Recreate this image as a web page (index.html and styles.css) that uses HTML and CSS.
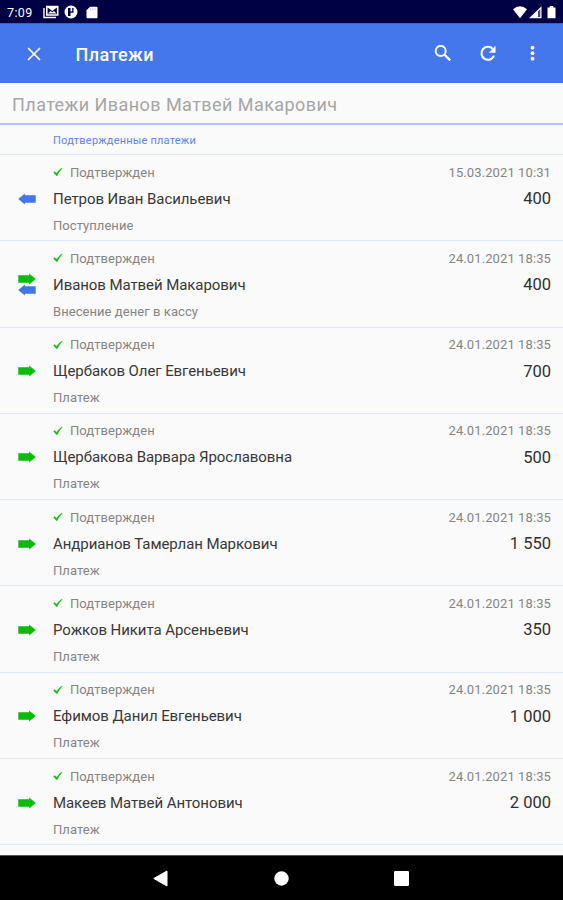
FILE: index.html
```html
<!DOCTYPE html>
<html lang="ru">
<head>
<meta charset="utf-8">
<title>Платежи</title>
<link rel="stylesheet" href="styles.css">
</head>
<body>
<svg width="0" height="0" class="defs">
  <symbol id="right" viewBox="0 0 18 12"><path d="M.3 2.300h10.800V.4L17.800 6l-6.700 5.600V9.700H.3z"/></symbol>
  <symbol id="left" viewBox="0 0 18 12"><path d="M17.700 2.300H6.900V.4L.2 6l6.700 5.600V9.700h10.800z"/></symbol>
  <symbol id="check" viewBox="0 0 10 10"><path d="M.3 5.500 1.700 4.300 3.600 6.100Q5.800 2.600 9 .8L9.500 1.300Q6.200 4.600 4.200 9L3.600 9z"/></symbol>
</svg>
<div class="screen">
  <div class="status">
    <span class="clock">7:09</span>
    <svg class="s-mail" width="16" height="14" viewBox="0 0 16 14"><path d="M1 3v9.500h12" fill="none" stroke="#fff" stroke-width="1.400"/><path d="M3 .7h12.500v10H3zM4.600 2.500v6.700h9.300V2.500L9.300 6z" fill="#fff" fill-rule="evenodd"/><path d="M5 8.500 7.500 6l1.800 1.300L11 6l2.500 2.500z" fill="#fff"/></svg>
    <svg class="s-p" width="14" height="14" viewBox="0 0 14 14"><circle cx="7" cy="7" r="6.500" fill="#fff"/><path d="M4 3h5.500v4.700H6.500V11H4z" fill="#000044"/><path d="M6.500 3h1.700v3.500H6.500z" fill="#fff"/></svg>
    <svg class="s-card" width="12" height="13" viewBox="0 0 12 13"><path d="M4 .8h6.500q1 0 1 1v9.400q0 1-1 1h-9q-1 0-1-1V4.300z" fill="#fff"/><path d="M4.700 2.200v2M6.900 2.200v2M9.100 2.200v2" stroke="#aaaac4" stroke-width=".7"/></svg>
    <div class="signals">
      <svg width="14" height="13" viewBox="0 0 14 13"><path d="M0 3.300Q7-2.600 14 3.300L7 12.300z" fill="#fff"/></svg>
      <svg width="13" height="13" viewBox="0 0 13 13"><path d="M0 12.300 12.500.3v12z" fill="#fff"/><path d="M9 5.300 11.300 3v8H9z" fill="#4a4a78"/></svg>
      <svg class="s-bat" width="9" height="13" viewBox="0 0 9 13"><path d="M2.700 0h3.600v1.400h2.200v10.900H.5V1.400h2.200z" fill="#fff"/></svg>
    </div>
  </div>
  <header class="bar">
    <svg class="close" width="14" height="14" viewBox="0 0 14 14"><path d="m1 1 12 12M13 1 1 13" fill="none" stroke="#fff" stroke-width="1.700"/></svg>
    <h1>Платежи</h1>
    <div class="actions">
      <svg width="18" height="18" viewBox="0 0 18 18" fill="none" stroke="#fff"><circle cx="6.700" cy="5.900" r="5" stroke-width="2"/><path d="m10.300 9.500 5.900 5.900" stroke-width="2.300"/></svg>
      <svg width="18" height="18" viewBox="0 0 18 18"><path d="M13.700 3.800A6.500 6.500 0 1 0 15 10.700" fill="none" stroke="#fff" stroke-width="2.100"/><path d="M16.500.8v7H9.700z" fill="#fff"/></svg>
      <svg class="more" width="5" height="18" viewBox="0 0 5 18" fill="#fff"><circle cx="2.500" cy="2.700" r="1.900"/><circle cx="2.500" cy="8.200" r="1.900"/><circle cx="2.500" cy="13.700" r="1.900"/></svg>
    </div>
  </header>
  <div class="search"><span>Платежи Иванов Матвей Макарович</span></div>
  <div class="section"><span>Подтвержденные платежи</span></div>
  <main class="list">
    <article class="row"><div class="dir"><svg class="blue"><use href="#left"/></svg></div><div class="info"><p class="state"><svg><use href="#check"/></svg>Подтвержден</p><p class="name">Петров Иван Васильевич</p><p class="kind">Поступление</p></div><div class="sum"><time>15.03.2021 10:31</time><b>400</b></div></article>
    <article class="row"><div class="dir"><svg class="green"><use href="#right"/></svg><svg class="blue"><use href="#left"/></svg></div><div class="info"><p class="state"><svg><use href="#check"/></svg>Подтвержден</p><p class="name">Иванов Матвей Макарович</p><p class="kind">Внесение денег в кассу</p></div><div class="sum"><time>24.01.2021 18:35</time><b>400</b></div></article>
    <article class="row"><div class="dir"><svg class="green"><use href="#right"/></svg></div><div class="info"><p class="state"><svg><use href="#check"/></svg>Подтвержден</p><p class="name">Щербаков Олег Евгеньевич</p><p class="kind">Платеж</p></div><div class="sum"><time>24.01.2021 18:35</time><b>700</b></div></article>
    <article class="row"><div class="dir"><svg class="green"><use href="#right"/></svg></div><div class="info"><p class="state"><svg><use href="#check"/></svg>Подтвержден</p><p class="name">Щербакова Варвара Ярославовна</p><p class="kind">Платеж</p></div><div class="sum"><time>24.01.2021 18:35</time><b>500</b></div></article>
    <article class="row"><div class="dir"><svg class="green"><use href="#right"/></svg></div><div class="info"><p class="state"><svg><use href="#check"/></svg>Подтвержден</p><p class="name">Андрианов Тамерлан Маркович</p><p class="kind">Платеж</p></div><div class="sum"><time>24.01.2021 18:35</time><b>1 550</b></div></article>
    <article class="row"><div class="dir"><svg class="green"><use href="#right"/></svg></div><div class="info"><p class="state"><svg><use href="#check"/></svg>Подтвержден</p><p class="name">Рожков Никита Арсеньевич</p><p class="kind">Платеж</p></div><div class="sum"><time>24.01.2021 18:35</time><b>350</b></div></article>
    <article class="row"><div class="dir"><svg class="green"><use href="#right"/></svg></div><div class="info"><p class="state"><svg><use href="#check"/></svg>Подтвержден</p><p class="name">Ефимов Данил Евгеньевич</p><p class="kind">Платеж</p></div><div class="sum"><time>24.01.2021 18:35</time><b>1 000</b></div></article>
    <article class="row"><div class="dir"><svg class="green"><use href="#right"/></svg></div><div class="info"><p class="state"><svg><use href="#check"/></svg>Подтвержден</p><p class="name">Макеев Матвей Антонович</p><p class="kind">Платеж</p></div><div class="sum"><time>24.01.2021 18:35</time><b>2 000</b></div></article>
  </main>
  <nav class="nav">
    <svg width="15" height="17" viewBox="0 0 15 17"><path d="M14 1v15L.8 8.500z" fill="#fff" stroke="#fff" stroke-linejoin="round"/></svg>
    <svg width="15" height="15" viewBox="0 0 15 15"><circle cx="7.500" cy="7.500" r="7.200" fill="#fff"/></svg>
    <svg width="15" height="15" viewBox="0 0 15 15"><rect width="15" height="15" rx="1.200" fill="#fff"/></svg>
  </nav>
</div>
</body>
</html>
```
FILE: styles.css
```css
* { box-sizing: border-box; }
body { margin: 0; font-family: Roboto, "Noto Sans", sans-serif; }
h1, p { margin: 0; }
svg { display: block; flex: none; }
.defs { position: absolute; }
.screen { width: 563px; height: 900px; display: flex; flex-direction: column; background: #fafafa; overflow: hidden; }
.status { height: 23px; flex: none; background: #000044; display: flex; align-items: center; padding: 1px 7px 0; color: #fff; }
.clock { font-size: 12.500px; width: 36px; letter-spacing: .4px; }
.s-p { margin-left: 5px; }
.s-card { margin-left: 8px; }
.signals { margin-left: auto; display: flex; gap: 2px; }
.s-bat { margin-left: 3px; }
.bar { height: 60px; flex: none; background: #4476ec; border-top: 1px solid #385fc4; color: #fff; display: flex; align-items: center; padding: 0 28px 0 27px; }
h1 { font-size: 18px; line-height: 24px; font-weight: 500; letter-spacing: .4px; margin: 2px 0 0 34.500px; }
.actions { margin-left: auto; display: flex; gap: 27px; padding-top: 1px; }
.more { margin-left: 6px; }
.search { height: 42px; flex: none; border-bottom: 2px solid #afc0f1; padding: 11px 12px 9px; font-size: 18px; line-height: 22px; color: #a6a6a6; letter-spacing: .44px; }
.section { height: 30px; flex: none; border-bottom: 1px solid #dfe4f8; padding: 9px 53px 6px; font-size: 11px; line-height: 14px; color: #5c85ec; letter-spacing: .2px; }
.list { display: grid; grid-template-rows: repeat(8, 86.300px); }
.row { display: grid; grid-template-columns: 53px 1fr auto; padding-right: 12px; border-bottom: 1px solid #dfe6f7; }
.dir { display: flex; flex-direction: column; justify-content: center; padding-left: 18px; height: 87px; }
.dir svg { width: 18px; height: 12px; }
.dir svg + svg { margin-top: -1px; }
.green { fill: #0abb0a; }
.blue { fill: #4275ea; }
.state { display: flex; align-items: center; height: 20px; margin-top: 7px; font-size: 13px; color: #858585; letter-spacing: .07px; }
.state svg { width: 10px; height: 10px; margin-right: 7px; fill: #20bd20; }
.name { height: 24px; line-height: 24px; margin-top: 4.500px; font-size: 15px; color: #383838; letter-spacing: -.07px; }
.kind { height: 20px; line-height: 20px; margin-top: 5px; font-size: 13px; color: #858585; letter-spacing: .06px; }
.sum { display: flex; flex-direction: column; align-items: flex-end; }
time { margin-top: 7.500px; height: 20px; line-height: 20px; font-size: 13px; color: #858585; letter-spacing: .1px; }
.sum b { margin-top: 4.500px; height: 24px; line-height: 24px; font-size: 16.500px; font-weight: 400; color: #303030; }
.nav { height: 45px; flex: none; margin-top: auto; background: #000; border-top: 1px solid #555; display: flex; align-items: center; justify-content: space-between; padding: 0 154px 0 153px; }
```
